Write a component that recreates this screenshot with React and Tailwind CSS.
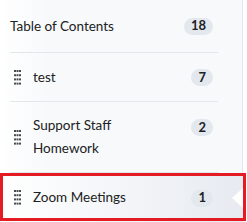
import React from 'react'

const ROWS = [
  { id: 'test', lines: ['test'], count: 7 },
  { id: 'support', lines: ['Support Staff', 'Homework'], count: 2 },
  { id: 'zoom', lines: ['Zoom Meetings'], count: 1, active: true },
]

function Grip() {
  const dots = []
  for (let r = 0; r < 4; r++)
    for (let c = 0; c < 3; c++)
      dots.push(<rect key={`${r}-${c}`} x={c * 2.5} y={r * 4.2} width="2" height="2" fill="#494c4e" />)
  return <svg width="7" height="15" viewBox="0 0 7 15" className="shrink-0">{dots}</svg>
}

function Badge({ children }) {
  return (
    <span className="inline-flex h-[17px] min-w-[21px] items-center justify-center rounded-full bg-[#e3e8ef] px-[7px] text-[13px] font-bold text-[#202122]">
      {children}
    </span>
  )
}

export default function App() {
  return (
    <div className="relative flex h-[222px] w-[247px] overflow-hidden bg-white font-['Lato','Noto_Sans',sans-serif] text-[13.5px] text-[#202122]">
      <div className="w-[243px] border-r border-[#e4e7eb] bg-linear-to-r from-white via-[#f7f9fb] via-20% to-[#f7f9fb]">
        <div className="ml-[10px] mr-[24px] flex h-[53px] items-center justify-between border-b border-[#e3e6ea] pr-[5px]">
          <span className="leading-[23px]">Table of Contents</span>
          <Badge>18</Badge>
        </div>
        {ROWS.map(row => (
          <div key={row.id} className={row.active ? 'relative bg-linear-to-r from-white to-[#e7ebf1]' : ''}>
            <div className={'ml-[10px] mr-[24px] flex items-center pl-[4px] pr-[5px] ' + (row.active ? 'h-[49px]' : row.lines.length > 1 ? 'h-[71px] border-b border-[#e3e6ea]' : 'h-[49px] border-b border-[#e3e6ea]')}>
              <Grip />
              <div className="ml-[12px] w-[130px] leading-[23px]">
                {row.lines.map(l => <div key={l}>{l}</div>)}
              </div>
              <div className={'ml-auto ' + (row.lines.length > 1 ? 'self-start mt-[15px]' : '')}>
                <Badge>{row.count}</Badge>
              </div>
            </div>
            {row.active && (
              <span className="absolute right-[-1px] top-1/2 -translate-y-1/2 border-y-[10px] border-r-[11px] border-y-transparent border-r-white" />
            )}
          </div>
        ))}
      </div>
      <div className="pointer-events-none absolute left-0 top-[173px] h-[48px] w-[246px] border-[3px] border-[#e51b24]" />
    </div>
  )
}
